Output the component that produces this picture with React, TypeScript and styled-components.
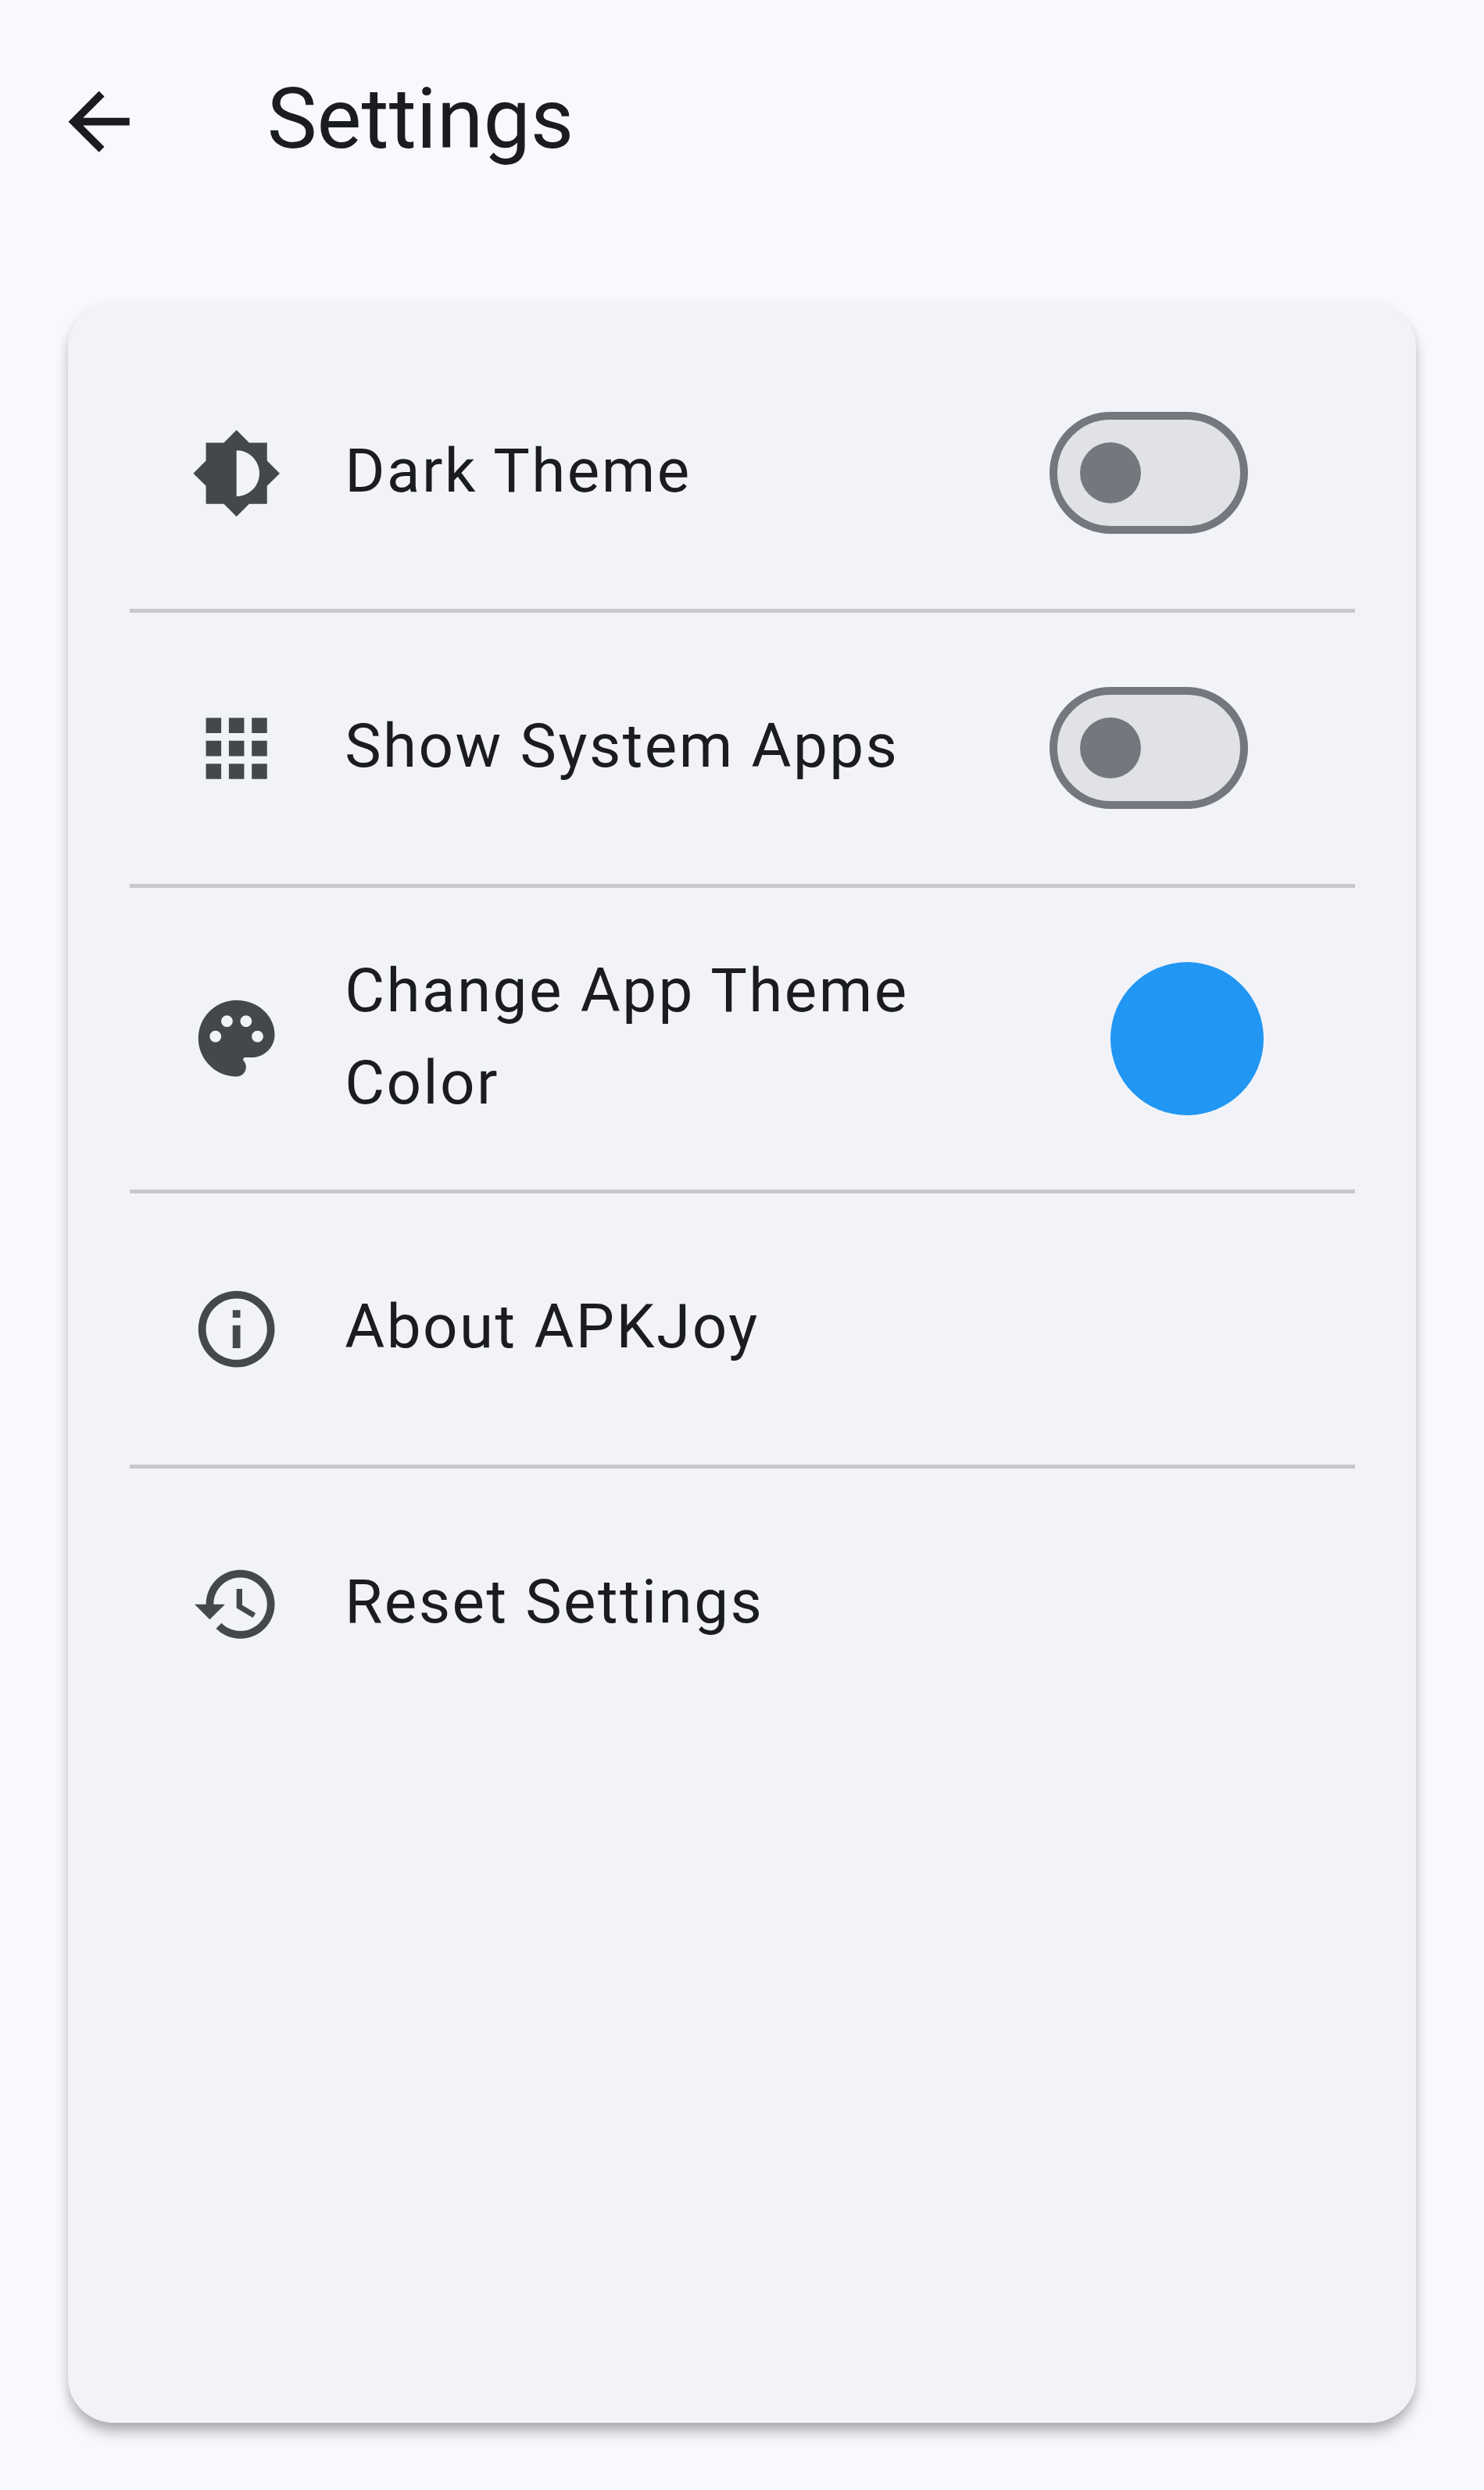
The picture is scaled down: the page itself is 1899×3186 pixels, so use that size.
import React, { useState } from "react";
import styled, { createGlobalStyle } from "styled-components";

const GlobalStyle = createGlobalStyle`
  *, *::before, *::after { box-sizing: border-box; }
  html, body { margin: 0; padding: 0; background: #f8f9fd; }
  body { font-family: Roboto, "Noto Sans", sans-serif; color: #1a1c20; }
`;

const Screen = styled.div`
  display: flex;
  flex-direction: column;
  width: 1899px;
  height: 3186px;
  padding: 0 87px 86px;
  overflow: hidden;
  background: #f8f9fd;
`;

const AppBar = styled.header`
  display: flex;
  align-items: center;
  height: 311px;
  margin-bottom: 75.5px;
  flex: none;
`;

const BackButton = styled.button`
  display: flex;
  width: 117.3px;
  height: 117.3px;
  margin: 0 156px 0 -18.6px;
  padding: 0;
  border: 0;
  background: none;
  color: #1a1c20;
`;

const Title = styled.h1`
  margin: 0;
  padding-bottom: 7px;
  font-size: 107.5px;
  line-height: 137px;
  font-weight: 400;
`;

const Card = styled.main`
  flex: 1;
  padding: 42.5px 78.5px 0 79px;
  border-radius: 58px;
  background: #f1f3f8;
  box-shadow:
    0 16px 20px -5px rgba(0, 0, 0, 0.23),
    0 7px 15px rgba(0, 0, 0, 0.14);
`;

const Row = styled.div<{ $tall?: boolean }>`
  display: flex;
  align-items: center;
  height: ${(p) => (p.$tall ? 391 : 352)}px;
  padding: 0 116.5px 0 78.4px;
`;

const Divider = styled.hr`
  height: 5px;
  margin: -2.5px 0;
  border: 0;
  background: #c7c8cc;
`;

const Icon = styled.svg`
  display: block;
  flex: none;
  width: 117.3px;
  height: 117.3px;
  fill: currentColor;
`;

const Leading = styled.span`
  flex: none;
  margin-right: 79.5px;
  padding-top: 1px;
  color: #44484b;
`;

const Label = styled.span`
  flex: 1;
  margin-right: 78px;
  padding-bottom: 4px;
  font-size: 78.2px;
  line-height: 117.3px;
  letter-spacing: 2.44px;
`;

const SwitchTrack = styled.button`
  display: flex;
  align-items: center;
  flex: none;
  width: 254px;
  height: 156px;
  margin-right: 20.5px;
  padding: 0 29px;
  border: 10px solid #74777d;
  border-radius: 78px;
  background: #e1e2e6;
`;

const SwitchThumb = styled.span<{ $on: boolean }>`
  width: 78.5px;
  height: 78.5px;
  border-radius: 50%;
  background: #74777e;
  transform: translateX(${(p) => (p.$on ? 98 : 0)}px);
`;

const Swatch = styled.span`
  flex: none;
  width: 196px;
  height: 196px;
  border-radius: 50%;
  background: #2196f3;
`;

const paths = {
  back: "M20 11H7.83l5.59-5.59L12 4l-8 8 8 8 1.41-1.41L7.83 13H20v-2z",
  brightness:
    "M20 15.31L23.31 12 20 8.69V4h-4.69L12 .69 8.69 4H4v4.69L.69 12 4 15.31V20h4.69L12 23.31 15.31 20H20v-4.69zM12 18V6c3.31 0 6 2.69 6 6s-2.69 6-6 6z",
  apps: "M4 8h4V4H4v4zm6 12h4v-4h-4v4zm-6 0h4v-4H4v4zm0-6h4v-4H4v4zm6 0h4v-4h-4v4zm6-10v4h4V4h-4zm-6 4h4V4h-4v4zm6 6h4v-4h-4v4zm0 6h4v-4h-4v4z",
  palette:
    "M12 2C6.49 2 2 6.49 2 12s4.49 10 10 10c1.38 0 2.5-1.12 2.5-2.5 0-.61-.23-1.2-.64-1.67-.08-.1-.13-.21-.13-.33 0-.28.22-.5.5-.5H16c3.31 0 6-2.69 6-6 0-4.96-4.49-9-10-9zm5.5 11c-.83 0-1.5-.67-1.5-1.5s.67-1.5 1.5-1.5 1.5.67 1.5 1.5-.67 1.5-1.5 1.5zm-3-4c-.83 0-1.5-.67-1.5-1.5S13.67 6 14.5 6s1.5.67 1.5 1.5S15.33 9 14.5 9zM5 11.5c0-.83.67-1.5 1.5-1.5s1.5.67 1.5 1.5S7.33 13 6.5 13 5 12.33 5 11.5zm6-4c0 .83-.67 1.5-1.5 1.5S8 8.33 8 7.5 8.67 6 9.5 6s1.5.67 1.5 1.5z",
  info: "M11 7h2v2h-2zm0 4h2v6h-2zm1-9C6.48 2 2 6.48 2 12s4.48 10 10 10 10-4.48 10-10S17.52 2 12 2zm0 18c-4.41 0-8-3.59-8-8s3.59-8 8-8 8 3.59 8 8-3.59 8-8 8z",
  history:
    "M13 3c-4.97 0-9 4.03-9 9H1l3.89 3.89.07.14L9 12H6c0-3.87 3.13-7 7-7s7 3.13 7 7-3.13 7-7 7c-1.93 0-3.68-.79-4.94-2.06l-1.42 1.42C8.27 19.99 10.51 21 13 21c4.97 0 9-4.03 9-9s-4.03-9-9-9zm-1 5v5l4.28 2.54.72-1.21-3.5-2.08V8H12z",
};

function Glyph({ name }: { name: keyof typeof paths }) {
  return (
    <Icon viewBox="0 0 24 24" aria-hidden="true">
      <path d={paths[name]} />
    </Icon>
  );
}

function Switch({ label }: { label: string }) {
  const [on, setOn] = useState(false);
  return (
    <SwitchTrack role="switch" aria-checked={on} aria-label={label} onClick={() => setOn(!on)}>
      <SwitchThumb $on={on} />
    </SwitchTrack>
  );
}

interface ItemProps {
  icon: keyof typeof paths;
  label: string;
  tall?: boolean;
  children?: React.ReactNode;
}

function Item({ icon, label, tall, children }: ItemProps) {
  return (
    <Row $tall={tall}>
      <Leading>
        <Glyph name={icon} />
      </Leading>
      <Label>{label}</Label>
      {children}
    </Row>
  );
}

export default function App() {
  return (
    <>
      <GlobalStyle />
      <Screen>
        <AppBar>
          <BackButton aria-label="Back">
            <Glyph name="back" />
          </BackButton>
          <Title>Settings</Title>
        </AppBar>
        <Card>
          <Item icon="brightness" label="Dark Theme">
            <Switch label="Dark Theme" />
          </Item>
          <Divider />
          <Item icon="apps" label="Show System Apps">
            <Switch label="Show System Apps" />
          </Item>
          <Divider />
          <Item icon="palette" label="Change App Theme Color" tall>
            <Swatch />
          </Item>
          <Divider />
          <Item icon="info" label="About APKJoy" />
          <Divider />
          <Item icon="history" label="Reset Settings" />
        </Card>
      </Screen>
    </>
  );
}
